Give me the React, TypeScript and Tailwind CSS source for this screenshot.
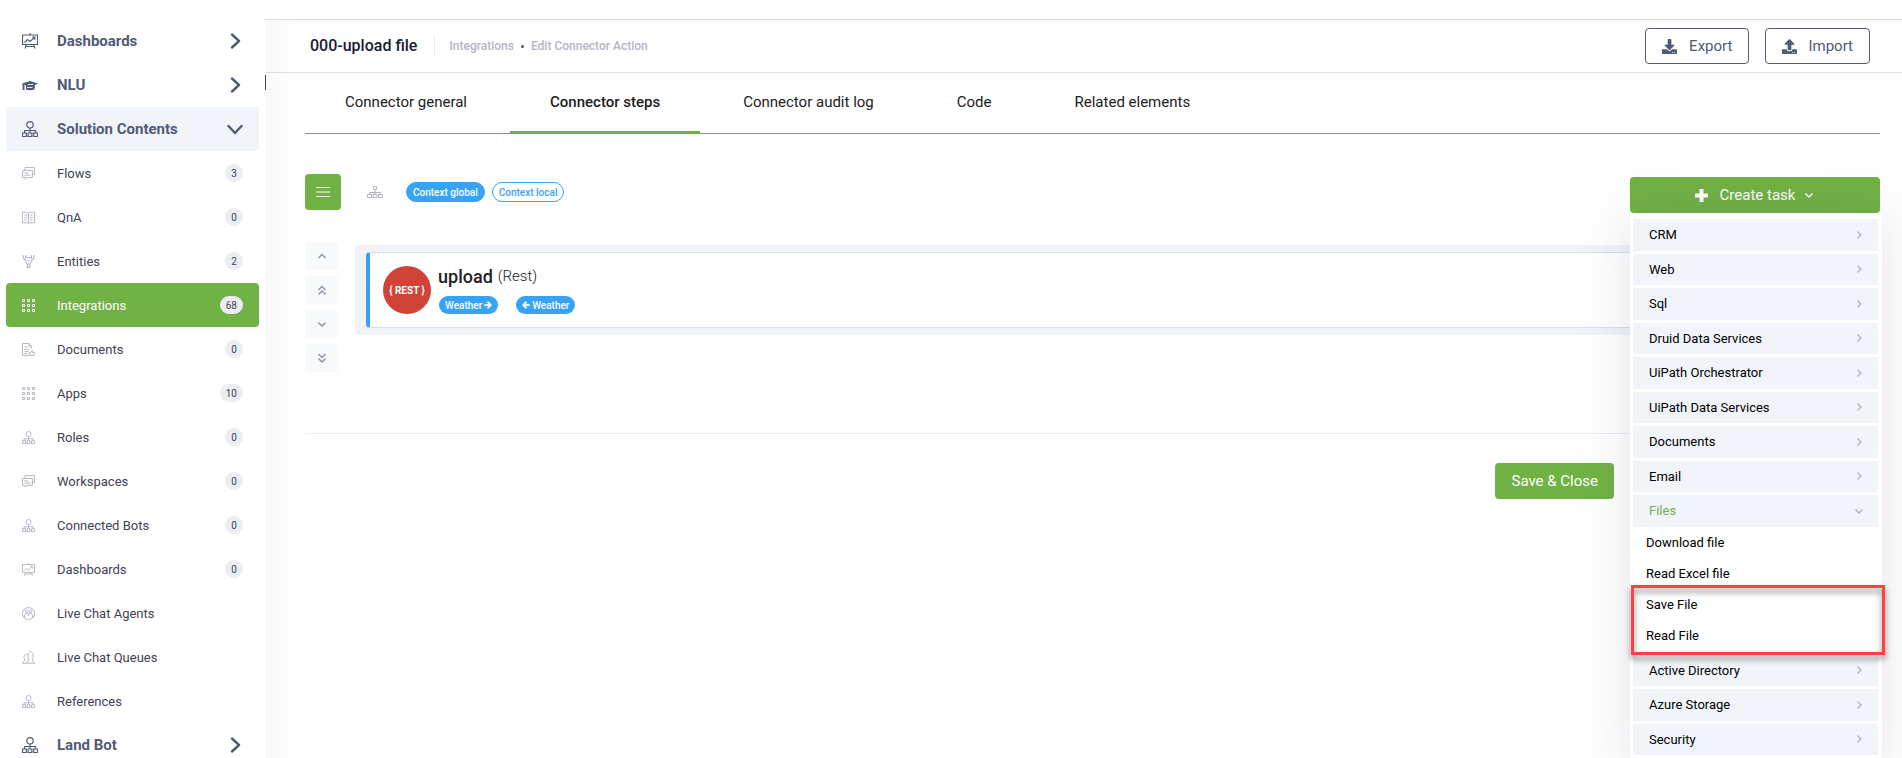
import type { ReactNode } from "react";
import { FaArrowLeft, FaArrowRight, FaDownload, FaUpload } from "react-icons/fa";

type IconName =
  | "board"
  | "cap"
  | "org"
  | "chat"
  | "book"
  | "nodes"
  | "grid"
  | "doc"
  | "agent"
  | "queue";

const iconShapes: Record<IconName, ReactNode> = {
  board: (
    <>
      <path d="M.5 2h15v9.500H.5zM8 0v2M4.500 11.500 3 15.500M11.500 11.500l1.500 4M4 13.500h8" />
      <path d="m2.500 9.500 3-3L8 8.500l4.500-4M10 4h2.800v2.800" />
    </>
  ),
  cap: (
    <>
      <path d="M0 6.500 8 4l8 2.500-3 1.500-.5 4.500C10 13.500 6 13.500 4 12.500V8.500z" fill="currentColor" stroke="none" />
      <path d="M1.500 6.500v6.500" strokeWidth="2" />
      <path d="M5.500 7.500h6M5 10.500h5.500" stroke="#fff" strokeWidth=".8" />
    </>
  ),
  org: (
    <>
      <circle cx="8" cy="3.800" r="3.200" />
      <path d="M8 7v5M2.500 12V9.500h11V12M.5 12h3.800v3.500H.5zM6.100 12h3.800v3.500H6.100zM11.700 12h3.800v3.500h-3.800z" />
    </>
  ),
  chat: (
    <>
      <path d="M3.700 4.300V.7h11.600v8.600h-2.500" />
      <path d="M.6 4.300h12.200v8.600H6l-2 2v-2H.6zM3 7.300h5M3 10h7.500" />
    </>
  ),
  book: (
    <>
      <path d="M8 3 6 1.500H.6v13H7l1 .8 1-.8h6.400v-13H10zM8 3v11.500" />
      <path d="M3 4.900h3M3 7.900h3M3 10.900h3M10 4.900h3M10 7.900h3M10 10.900h3" />
    </>
  ),
  nodes: (
    <>
      <path d="M1.500 1v4h3V1M11.500 1v4h3V1M6.500 15v-4h3v4zM4.500 3h7M3 5l3.500 7M13 5l-3.500 7M6 6l2 2 2-2M5.500 15.300h5" />
      <path d="M0 1h2M4 1h1.500M10.500 1h2M14 1h2" />
    </>
  ),
  grid: (
    <path d="M.6.6h2.500v2.500H.6zM6.750.6h2.500v2.500h-2.500zM12.900.6h2.500v2.500h-2.500zM.6 6.750h2.500v2.500H.6zM6.750 6.750h2.500v2.500h-2.500zM12.900 6.750h2.500v2.500h-2.500zM.6 12.900h2.500v2.500H.6zM6.750 12.900h2.500v2.500h-2.500zM12.900 12.900h2.500v2.500h-2.500z" />
  ),
  doc: (
    <>
      <path d="M11.700 7V4L8.500.6H.6v14.800H9M8.500.6V4h3.200M3 4.900h4M3 7.900h6M3 10.500h5M3 13h4" />
      <path d="M9 11.500h2l1.500-2.500v2.500h2.800l-.5 3.800H10z" />
    </>
  ),
  agent: (
    <>
      <circle cx="8" cy="8" r="7.400" />
      <circle cx="5.700" cy="5.500" r="1.700" />
      <circle cx="10.300" cy="5.500" r="1.700" />
      <path d="M3 13c0-3.500.6-5.300 2.700-5.300 1.500 0 2.300 1.300 2.300 3.300 0-2 .8-3.300 2.300-3.300C12.400 7.700 13 9.500 13 13" />
    </>
  ),
  queue: (
    <path d="M0 15h16M1 14.500c0-2 2.500-1.500 2.500-3C2 9.500 2 4 4.800 3.500c1.500 0 2.200.8 2.500 2M6 14.500c0-2 2.500-1.500 2.500-3.500C6.500 8 7 .8 10.500.8S14.500 8 12.800 11c0 2 2.200 1.500 2.200 3.500" />
  ),
};

function MenuIcon({ name, className }: { name: IconName; className: string }) {
  return (
    <svg viewBox="0 0 16 16" fill="none" stroke="currentColor" strokeWidth="1.2" className={className} aria-hidden="true">
      {iconShapes[name]}
    </svg>
  );
}

const anglePaths = {
  up: "M2.500 8 6 4.500 9.500 8",
  down: "M2.500 4.500 6 8l3.500-3.500",
  right: "M4.500 2.500 8 6 4.500 9.500",
  doubleUp: "M2.500 6 6 2.500 9.500 6M2.500 10.500 6 7l3.500 3.500",
  doubleDown: "M2.500 2 6 5.500 9.500 2M2.500 6.500 6 10l3.500-3.500",
};

type AngleDirection = keyof typeof anglePaths;

function Angle({ direction, className = "" }: { direction: AngleDirection; className?: string }) {
  return (
    <svg
      viewBox="0 0 12 12"
      fill="none"
      stroke="currentColor"
      strokeWidth="1.4"
      className={`h-3 w-3 ${className}`}
      aria-hidden="true"
    >
      <path d={anglePaths[direction]} />
    </svg>
  );
}

function Chevron({ open }: { open?: boolean }) {
  return (
    <svg
      viewBox="0 0 16 16"
      fill="none"
      stroke="currentColor"
      strokeWidth="2.4"
      strokeLinecap="round"
      strokeLinejoin="round"
      className="h-4 w-4"
      aria-hidden="true"
    >
      <path d={open ? "M1.500 5 8 12l6.500-7" : "M5 1.500 12 8l-7 6.500"} />
    </svg>
  );
}

interface SectionProps {
  icon: IconName;
  label: string;
  open?: boolean;
}

function Section({ icon, label, open }: SectionProps) {
  return (
    <a
      href="#"
      className={`flex h-11 shrink-0 items-center px-4 text-[15px] font-bold text-[#525a78] ${open ? "bg-[#f1f5f9]" : ""}`}
    >
      <MenuIcon name={icon} className="mr-[19px] h-4 w-4" />
      <span className="flex-1">{label}</span>
      <Chevron open={open} />
    </a>
  );
}

interface Item {
  icon: IconName;
  label: string;
  count?: number;
  active?: boolean;
}

const items: Item[] = [
  { icon: "chat", label: "Flows", count: 3 },
  { icon: "book", label: "QnA", count: 0 },
  { icon: "nodes", label: "Entities", count: 2 },
  { icon: "grid", label: "Integrations", count: 68, active: true },
  { icon: "doc", label: "Documents", count: 0 },
  { icon: "grid", label: "Apps", count: 10 },
  { icon: "org", label: "Roles", count: 0 },
  { icon: "chat", label: "Workspaces", count: 0 },
  { icon: "org", label: "Connected Bots", count: 0 },
  { icon: "board", label: "Dashboards", count: 0 },
  { icon: "agent", label: "Live Chat Agents" },
  { icon: "queue", label: "Live Chat Queues" },
  { icon: "org", label: "References" },
];

function SidebarItem({ icon, label, count, active }: Item) {
  return (
    <a
      href="#"
      className={`flex h-11 shrink-0 items-center rounded px-4 text-[13px] leading-5 ${active ? "bg-[#70b244] text-white" : "text-[#3f4254]"}`}
    >
      <MenuIcon name={icon} className={`mr-[22px] h-[13px] w-[13px] ${active ? "text-white" : "text-[#b5b5c3]"}`} />
      <span className="flex-1 pt-px">{label}</span>
      {count !== undefined && (
        <span className="flex h-[18px] min-w-[18px] items-center justify-center rounded-full bg-[#ebedf3] px-[6px] pt-px text-[10px] text-[#3f4254]">
          {count}
        </span>
      )}
    </a>
  );
}

const tabs = ["Connector general", "Connector steps", "Connector audit log", "Code", "Related elements"];

const categories = [
  "CRM",
  "Web",
  "Sql",
  "Druid Data Services",
  "UiPath Orchestrator",
  "UiPath Data Services",
  "Documents",
  "Email",
];

function Category({ label, open }: { label: string; open?: boolean }) {
  return (
    <button
      type="button"
      className={`flex w-full items-center justify-between bg-[#f1f5f9] py-[6px] pr-[13px] pl-4 text-left leading-normal ${open ? "text-[#70b244]" : "mb-[3px]"}`}
    >
      {label}
      <Angle direction={open ? "down" : "right"} className="text-[#b0b3c2]" />
    </button>
  );
}

function TaskOption({ label }: { label: string }) {
  return (
    <button type="button" className="block h-[31px] w-full px-[13px] text-left">
      {label}
    </button>
  );
}

function CreateTask() {
  return (
    <div className="relative z-10 w-[250px]">
      <button
        type="button"
        className="flex h-9 w-full items-center justify-center rounded bg-[#70b244] text-[15px] text-white"
      >
        <svg viewBox="0 0 13 13" fill="currentColor" className="mr-3 h-[13px] w-[13px]" aria-hidden="true">
          <path d="M4.500 0h4v4.500H13v4H8.500V13h-4V8.500H0v-4h4.500z" />
        </svg>
        Create task
        <Angle direction="down" className="ml-2" />
      </button>
      <div className="absolute top-9 left-0 w-[252px] bg-white pt-[6px] pr-1 pb-4 pl-[3px] text-[13px] text-black shadow-[0_0_50px_rgba(82,63,105,0.15)]">
        {categories.map((label) => (
          <Category key={label} label={label} />
        ))}
        <Category label="Files" open />
        <div className="mb-[3px] pt-px">
          <TaskOption label="Download file" />
          <TaskOption label="Read Excel file" />
          <div className="relative">
            <TaskOption label="Save File" />
            <TaskOption label="Read File" />
            <div className="pointer-events-none absolute -top-[5px] -right-[7px] -bottom-[3px] -left-[2px] border-[3px] border-[#ff4040] drop-shadow-[0_4px_3px_rgba(0,0,0,0.5)]" />
          </div>
        </div>
        <Category label="Active Directory" />
        <Category label="Azure Storage" />
        <Category label="Security" />
      </div>
    </div>
  );
}

const moveButtons: { label: string; direction: AngleDirection }[] = [
  { label: "Move up", direction: "up" },
  { label: "Move to top", direction: "doubleUp" },
  { label: "Move down", direction: "down" },
  { label: "Move to bottom", direction: "doubleDown" },
];

function StepCard() {
  return (
    <div className="h-[90px] min-w-0 flex-1 rounded bg-[#f0f3f8] py-[7px] pl-[11px]">
      <div className="flex h-full items-center rounded-sm border-y border-l-4 border-y-[#d8dde8] border-l-[#36a3f7] bg-white pl-[13px]">
        <div className="flex h-12 w-12 items-center justify-center rounded-full bg-[#d04437] text-[10px] font-bold whitespace-nowrap text-white">
          {"{ REST }"}
        </div>
        <div className="ml-[7px]">
          <div className="flex items-start gap-[5px] text-[#212121]">
            <span className="text-lg leading-[22px] font-medium">upload</span>
            <span className="text-[15px] leading-5 font-light">(Rest)</span>
          </div>
          <div className="mt-2 ml-px flex gap-[18px] text-[10px] font-medium text-white">
            <span className="flex h-[18px] items-center gap-[2px] rounded-full bg-[#36a3f7] px-[6px]">
              Weather
              <FaArrowRight className="h-2 w-2" stroke="currentColor" strokeWidth="50" />
            </span>
            <span className="flex h-[18px] items-center gap-[2px] rounded-full bg-[#36a3f7] px-[6px]">
              <FaArrowLeft className="h-2 w-2" stroke="currentColor" strokeWidth="50" />
              Weather
            </span>
          </div>
        </div>
      </div>
    </div>
  );
}

export default function App() {
  return (
    <div className="flex h-screen overflow-hidden bg-white font-['Roboto',sans-serif] text-[13px] text-[#3f4254]">
      <aside className="flex w-[265px] shrink-0 flex-col px-[6px] pt-[19px]">
        <Section icon="board" label="Dashboards" />
        <Section icon="cap" label="NLU" />
        <Section icon="org" label="Solution Contents" open />
        {items.map((item) => (
          <SidebarItem key={item.label} {...item} />
        ))}
        <Section icon="org" label="Land Bot" />
      </aside>

      <main className="flex min-w-0 flex-1 flex-col pt-[19px]">
        <div className="relative flex-1 bg-linear-to-r from-[#f8f8f8] to-white to-[32px]">
          <div className="absolute top-14 left-0 h-[15px] w-px bg-[#3f4254]" />
          <header className="flex h-[54px] items-center border-y border-[#dcdee8] pr-8 pl-[45px]">
            <h1 className="border-r border-[#ebedf3] pr-[17px] text-base leading-[22px] font-medium text-[#181c32]">
              000-upload file
            </h1>
            <nav className="flex flex-1 items-center pl-[14px] text-xs font-medium text-[#b5b5c3]">
              <a href="#">Integrations</a>
              <span className="mx-[7px] h-[3px] w-[3px] rounded-full bg-[#50577a]" />
              <a href="#">Edit Connector Action</a>
            </nav>
            <div className="flex gap-4 text-[15px] text-[#525a78]">
              <button type="button" className="flex h-9 items-center gap-3 rounded border border-[#525a78] px-4">
                <FaDownload className="h-[15px] w-[15px]" />
                Export
              </button>
              <button type="button" className="flex h-9 items-center gap-[11px] rounded border border-[#525a78] px-4">
                <FaUpload className="h-[15px] w-[15px]" />
                Import
              </button>
            </div>
          </header>

          <div className="pr-[22px] pl-10">
            <div className="flex h-[61px] gap-[3px] border-b border-[#8c8c8c] text-[15px] text-[#212121]">
              {tabs.map((tab) => (
                <button
                  key={tab}
                  type="button"
                  className={`-mb-px border-b-[3px] px-10 ${
                    tab === "Connector steps" ? "border-[#70b244] font-medium" : "border-transparent"
                  }`}
                >
                  {tab}
                </button>
              ))}
            </div>

            <div className="mt-10 flex h-9 items-center">
              <button
                type="button"
                aria-label="List view"
                className="flex h-9 w-9 items-center justify-center rounded bg-[#70b244] text-white"
              >
                <svg viewBox="0 0 14 10" className="h-[10px] w-[14px]" stroke="currentColor" aria-hidden="true">
                  <path d="M0 .5h14M0 5h14M0 9.500h14" />
                </svg>
              </button>
              <button type="button" aria-label="Tree view" className="ml-[26px] text-[#b5b5c3]">
                <svg viewBox="0 0 16 12" fill="none" stroke="currentColor" className="h-3 w-4" aria-hidden="true">
                  <path d="M6.500.5h3v3h-3zM.5 8.500h4v3h-4zM6 8.500h4v3H6zM11.500 8.500h4v3h-4zM8 3.500v5M2.500 8.500v-2h11v2" />
                </svg>
              </button>
              <div className="ml-[23px] flex flex-1 gap-[7px] text-[10px] font-medium">
                <button type="button" className="h-5 rounded-full border border-[#36a3f7] bg-[#36a3f7] px-[6px] text-white">
                  Context global
                </button>
                <button type="button" className="h-5 rounded-full border border-[#36a3f7] bg-white px-[6px] text-[#36a3f7]">
                  Context local
                </button>
              </div>
              <div className="mt-[6px]">
                <CreateTask />
              </div>
            </div>

            <div className="mt-8 flex gap-[17px]">
              <div className="flex flex-col gap-[6px]">
                {moveButtons.map(({ label, direction }) => (
                  <button
                    key={label}
                    type="button"
                    aria-label={label}
                    className="flex h-7 w-[33px] items-center justify-center rounded bg-[#f8f9fb] text-[#8c90a3]"
                  >
                    <Angle direction={direction} />
                  </button>
                ))}
              </div>
              <div className="flex min-w-0 flex-1 pt-[3px]">
                <StepCard />
              </div>
            </div>

            <div className="mt-[61px] flex justify-end border-t border-[#ebedf3] pt-[29px] pr-[266px]">
              <button type="button" className="h-9 rounded bg-[#70b244] px-4 text-[15px] text-white">
                Save &amp; Close
              </button>
            </div>
          </div>
        </div>
      </main>
    </div>
  );
}
